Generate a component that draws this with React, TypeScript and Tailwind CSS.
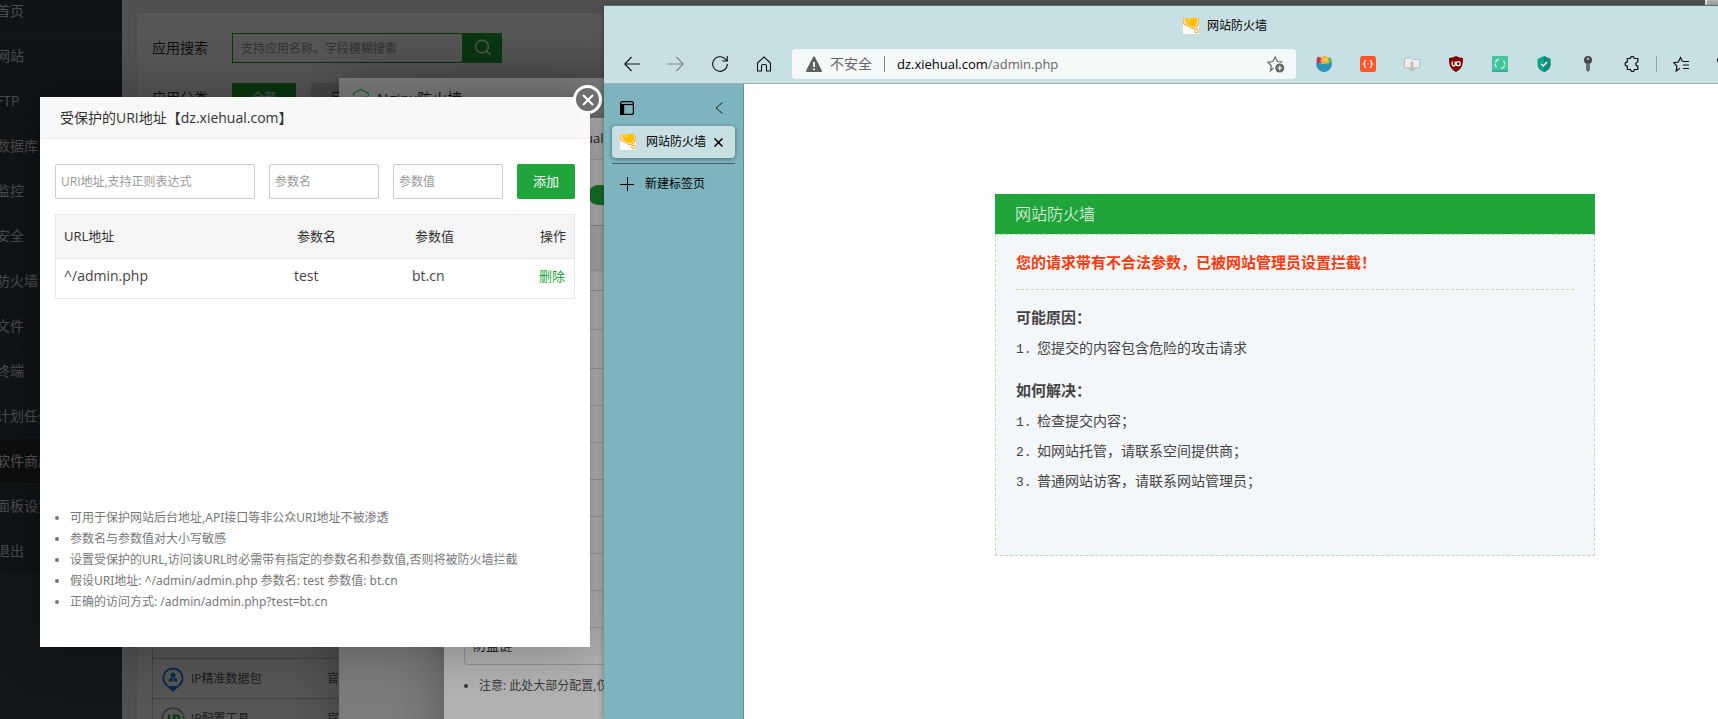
import type { ReactNode } from "react";

const MENU = ["首页", "网站", "FTP", "数据库", "监控", "安全", "防火墙", "文件", "终端", "计划任务", "软件商店", "面板设置", "退出"];

const TIPS = [
  "可用于保护网站后台地址,API接口等非公众URI地址不被渗透",
  "参数名与参数值对大小写敏感",
  "设置受保护的URL,访问该URL时必需带有指定的参数名和参数值,否则将被防火墙拦截",
  "假设URI地址: ^/admin/admin.php 参数名: test 参数值: bt.cn",
  "正确的访问方式: /admin/admin.php?test=bt.cn",
];

const CONFIG_ROWS = ["wide", "wide", "", "", "", "", "", "", ""];

function Shade() {
  return <div className="absolute inset-0 bg-black/30" />;
}

function SideMenu() {
  return (
    <nav className="w-[122px] shrink-0 overflow-hidden bg-[#3a464d]">
      <ul className="-mt-[11px]">
        {MENU.map((label) => (
          <li key={label} className="mb-px">
            <a
              href="#"
              className={
                label === "软件商店"
                  ? "-ml-1 block h-11 whitespace-nowrap bg-[#2c2e2f] text-sm leading-[43px] text-[#f0f0f0]"
                  : "-ml-1 block h-11 whitespace-nowrap bg-[#354046] text-sm leading-[43px] text-[#d8dcde]"
              }
            >
              {label}
            </a>
          </li>
        ))}
      </ul>
    </nav>
  );
}

function StoreRow({ icon, name }: { icon: ReactNode; name: string }) {
  return (
    <tr className="h-10 border-t border-[#c9c9c9]">
      <td className="w-[38px] pl-2">{icon}</td>
      <td className="w-[136px]">{name}</td>
      <td>官方</td>
    </tr>
  );
}

function Store() {
  return (
    <main className="flex min-w-0 flex-1 flex-col bg-[#f0f0f0] pt-[13px] pl-[15px]">
      <section className="relative flex-1 rounded-tl bg-white pl-[15px] shadow-[0_0_6px_rgba(0,0,0,0.1)]">
        <div className="mt-5 flex items-center text-sm text-[#333]">
          <label htmlFor="app-search" className="w-20">应用搜索</label>
          <input
            id="app-search"
            placeholder="支持应用名称、字段模糊搜索"
            className="h-[30px] w-[231px] border border-[#20a53a] px-2 text-xs placeholder:text-[#999]"
          />
          <button aria-label="搜索" className="flex h-[30px] w-[39px] items-center justify-center bg-[#20a53a]">
            <svg width="18" height="18" viewBox="0 0 18 18" fill="none" stroke="#fff" strokeWidth="1.4">
              <circle cx="8" cy="7.500" r="6.300" />
              <path d="M12.500 12l4 4" />
            </svg>
          </button>
        </div>
        <div className="mt-5 flex items-center text-sm text-[#333]">
          <span className="w-20">应用分类</span>
          <button className="h-[30px] w-16 bg-[#20a53a] text-xs text-white">全部</button>
          <button className="ml-[15px] h-[30px] w-[76px] bg-[#ddd] text-xs text-[#333]">已安装</button>
        </div>
        <div className="mt-[505px] mr-4 border-l border-[#c9c9c9]">
          <table className="w-full table-fixed border-collapse text-left text-xs text-[#555]">
            <tbody>
              <tr className="h-10 border-t border-[#c9c9c9]">
                <td className="w-[38px] pl-2">
                  <svg width="24" height="24" viewBox="0 0 24 24">
                    <path d="M12 1l7 3v6c0 4-3 7-7 9-4-2-7-5-7-9V4z" fill="#20a53a" />
                  </svg>
                </td>
                <td className="w-[136px]" />
                <td />
              </tr>
              <StoreRow
                name="IP精准数据包"
                icon={
                  <svg width="24" height="26" viewBox="0 0 24 26">
                    <path d="M12 2.500a9.500 9.500 0 0 1 6.500 16.400L12 24.500l-6.500-5.600A9.500 9.500 0 0 1 12 2.500z" fill="none" stroke="#2079e0" strokeWidth="1.800" />
                    <path d="M6.500 20h11L12 25z" fill="#2079e0" />
                    <circle cx="12" cy="9" r="2.500" fill="#2079e0" />
                    <path d="M7.500 15.500c0-3 2-4 4.500-4s4.500 1 4.500 4z" fill="#2079e0" />
                    <path d="M12 12v3.500" stroke="#fff" strokeWidth="1" />
                  </svg>
                }
              />
              <StoreRow
                name="IP配置工具"
                icon={
                  <svg width="24" height="24" viewBox="0 0 24 24">
                    <circle cx="12" cy="12" r="11" fill="none" stroke="#999" strokeWidth="1.500" />
                    <path d="M8 7.500v9M13 16.500v-8h3a2.200 2.200 0 0 1 0 4.400h-3" fill="none" stroke="#20a53a" strokeWidth="2.200" />
                  </svg>
                }
              />
            </tbody>
          </table>
        </div>
      </section>
    </main>
  );
}

function FirewallWindow() {
  return (
    <section className="absolute top-[78px] left-[339px] h-[820px] w-[900px] bg-white shadow-[1px_1px_50px_rgba(0,0,0,0.3)]">
      <header className="flex items-center gap-2 px-3.5 pt-2 text-[15px] leading-6 text-[#333]">
        <svg width="16" height="20" viewBox="0 0 16 20" fill="none" stroke="#20a53a">
          <path d="M.7 8V5L8 1.500 15.300 5v3M.7 13v2.500L8 19l7.300-3.500V13" />
          <path d="M1 9l1.200 3 1.300-3 1.200 3L6 9m1 3l1.300-3 1.300 3m1.400 0V9h3" strokeWidth=".8" />
        </svg>
        <h2>Nginx防火墙</h2>
      </header>
    </section>
  );
}

function SiteWindow() {
  return (
    <section className="absolute top-[118px] left-[444px] h-[700px] w-[700px] bg-white text-[#333] shadow-[1px_1px_50px_rgba(0,0,0,0.3)]">
      <header className="h-[42px] border-b border-[#e0e0e0] bg-[#f8f8f8] pl-[141px] text-[13px] leading-[41px]">ual</header>
      <div className="flex h-[65px] items-center pl-36">
        <button role="switch" aria-checked="true" aria-label="防火墙开关" className="mt-1 h-5 w-9 rounded-full bg-[#20a53a]" />
      </div>
      <div className="h-11 border-t border-[#ccc] bg-[#f3f3f3] shadow-[0_2px_3px_rgba(0,0,0,0.12)]" />
      <div className="mx-5 mt-[21px] rounded-b border border-[#d5d5d5]">
        {CONFIG_ROWS.map((size, i) => (
          <div key={i} className={size === "wide" ? "h-[39px] border-b border-[#ddd]" : "h-[37px] border-b border-[#ddd]"} />
        ))}
        <div className="h-9 pl-2 text-[13px] leading-[34px]">防盗链</div>
      </div>
      <ul className="mt-[11px] ml-[35px] list-disc text-xs leading-5 text-[#555]">
        <li>注意: 此处大部分配置,仅</li>
      </ul>
    </section>
  );
}

function UriDialog() {
  const field = "h-[35px] rounded-xs border border-[#ccc] px-[5px] text-xs placeholder:text-[#999]";
  return (
    <section
      role="dialog"
      aria-labelledby="uri-title"
      className="absolute top-[97px] left-10 flex h-[550px] w-[550px] flex-col bg-white shadow-[1px_1px_50px_rgba(0,0,0,0.3)]"
    >
      <header className="h-[42px] border-b border-[#eee] bg-[#f8f8f8] px-5">
        <h2 id="uri-title" className="text-sm leading-[41px] text-[#333]">受保护的URI地址【dz.xiehual.com】</h2>
      </header>
      <button
        aria-label="关闭"
        className="absolute -top-3 -right-3 flex size-[29px] items-center justify-center rounded-full border-3 border-white bg-[#6f6f6f]"
      >
        <svg width="12" height="12" viewBox="0 0 12 12" stroke="#fff" strokeWidth="2">
          <path d="M1 1l10 10M11 1L1 11" />
        </svg>
      </button>
      <form className="mx-[15px] mt-[25px] flex justify-between" onSubmit={(e) => e.preventDefault()}>
        <input aria-label="URI地址" placeholder="URI地址,支持正则表达式" className={`${field} w-[200px]`} />
        <input aria-label="参数名" placeholder="参数名" className={`${field} w-[110px]`} />
        <input aria-label="参数值" placeholder="参数值" className={`${field} w-[110px]`} />
        <button className="h-[35px] w-[58px] rounded-xs bg-[#20a53a] text-[13px] text-white">添加</button>
      </form>
      <div className="mx-[15px] mt-[15px] border border-[#e8e8e8]">
        <table className="w-full table-fixed text-left text-[13px]">
          <thead className="border-b border-[#e8e8e8] bg-[#f5f5f5] text-[#333]">
            <tr className="h-[43px]">
              <th className="w-[232px] pl-2 font-normal">URL地址</th>
              <th className="w-[118px] pl-[9px] font-normal">参数名</th>
              <th className="pl-[9px] font-normal">参数值</th>
              <th className="w-20 pr-2 text-right font-normal">操作</th>
            </tr>
          </thead>
          <tbody className="text-[#444]">
            <tr className="h-10 text-sm">
              <td className="pb-[5px] pl-2">^/admin.php</td>
              <td className="pb-[5px] pl-1.5">test</td>
              <td className="pb-[5px] pl-1.5">bt.cn</td>
              <td className="pr-[9px] pb-[3px] text-right text-[13px]">
                <a href="#" className="text-[#20a53a]">删除</a>
              </td>
            </tr>
          </tbody>
        </table>
      </div>
      <ul className="mt-auto mb-[35px] ml-[30px] list-disc font-['Noto_Sans','Noto_Sans_CJK_SC',sans-serif] text-xs leading-[21px] text-[#777]">
        {TIPS.map((tip) => (
          <li key={tip}>{tip}</li>
        ))}
      </ul>
    </section>
  );
}

function Favicon() {
  return (
    <svg width="16" height="16" viewBox="0 0 16 16" className="shrink-0">
      <path d="M0 0h16v16H0z" fill="#fff" />
      <path d="M0 0h16v6c-.5 2.500-3 5-6 5.200-2 0-3-1-4.500-2.200S1 8 0 6z" fill="#ffb75c" />
      <path d="M1 0h14v5c-1 2.500-3 5-5.200 5S6.500 8.500 5 7.500 1.500 6 1 4.500z" fill="#ffe0a8" />
      <path d="M2 0h12v4.500c-1 2.500-2.500 4.600-4.300 4.600S6.500 7.700 5 6.700 2.500 4 2 0z" fill="#ffbf00" />
      <path d="M3 0h5c1 2-1 4-3.500 4z" fill="#ffd02e" />
      <circle cx="13.500" cy="13" r="1.800" fill="#fff" stroke="#ffad42" strokeWidth="1.200" />
    </svg>
  );
}

function Tool({ label, children }: { label: string; children: ReactNode }) {
  return (
    <button aria-label={label} className="flex h-8 w-11 shrink-0 items-center justify-center">
      <svg width="16" height="16" viewBox="0 0 16 16" fill="none" stroke="#111" strokeWidth="1.100">
        {children}
      </svg>
    </button>
  );
}

function Toolbar() {
  return (
    <header className="h-[78px] border-b border-[#9ab3b7] bg-[#c8dfe3]">
      <div className="flex h-10 items-center justify-center gap-2 text-xs text-black">
        <Favicon />
        <h1>网站防火墙</h1>
      </div>
      <div className="mt-0.5 flex h-8 items-center pl-1.5">
        <Tool label="后退"><path d="M7.500 1L.8 8l6.700 7M1 8h15" /></Tool>
        <Tool label="前进"><path d="M8.500 1l6.700 7-6.700 7M15 8H0" stroke="#7b898b" /></Tool>
        <Tool label="刷新"><path d="M15.300 8a7.300 7.300 0 1 1-2.200-5.200L15 4.700M15.300 0v5h-5" /></Tool>
        <Tool label="主页"><path d="M1.500 7L8 1l6.500 6v8h-4v-5a1.500 1.500 0 0 0-1.500-1.500H7A1.500 1.500 0 0 0 5.500 10v5h-4z" /></Tool>
        <div className="ml-1.5 flex h-[30px] min-w-0 flex-1 items-center rounded bg-[#f5f9fa] px-[11px] text-sm">
          <svg width="22" height="17" viewBox="0 0 22 17" className="shrink-0">
            <path d="M11 1.500l7 13.500H4z" fill="#5f6263" stroke="#5f6263" strokeWidth="2" strokeLinejoin="round" />
            <path d="M11 6v5M11 12.500v1.500" stroke="#fff" strokeWidth="1.800" />
          </svg>
          <span className="ml-[5px] text-[#666]">不安全</span>
          <span className="mx-3 h-4 w-px bg-[#888]" />
          <span className="flex-1 text-[13px] text-[#666]"><span className="text-black">dz.xiehual.com</span>/admin.php</span>
          <button aria-label="收藏此页">
            <svg width="18" height="18" viewBox="0 0 18 18" fill="none" stroke="#666" strokeWidth="1.200">
              <path d="M6.500 13L3.500 15.800l.8-5L.8 7.200l5-.7L8.200 2l2.300 4.500 5 .7" />
              <circle cx="12.800" cy="13" r="4.500" fill="#5f6263" stroke="none" />
              <path d="M12.800 10.500v5M10.300 13h5" stroke="#fff" />
            </svg>
          </button>
        </div>
        <div className="ml-1.5 flex shrink-0 items-center">
          <Tool label="沙拉查词">
            <g stroke="none">
              <path d="M.5 7C1 4 0 2 2 .8l4 1.200v5z" fill="#c0394b" />
              <path d="M11 3l2.500-2L15.700 4v3.500H11z" fill="#4bb56a" />
              <path d="M4.500 6c0-3.500 1.500-6 4-6s4.500 2 4.500 7l-4 1z" fill="#f6b42c" />
              <path d="M7 3l1.500 1.500L11 3" fill="none" stroke="#fbd873" />
              <path d="M0 6.500c2 0 4 1.200 8 1.200s6-.7 8-.7c0 5.500-3.500 9-8 9S0 12 0 6.500z" fill="#2b93b5" />
            </g>
          </Tool>
          <Tool label="JSON">
            <rect width="16" height="16" rx="2.500" fill="#ff5630" stroke="none" />
            <path d="M6 4.500c-2 0-1 1.500-1.300 2.500L3.500 8l1.200 1c.3 1-.7 2.500 1.300 2.500M10 4.500c2 0 1 1.500 1.300 2.500l1.200 1-1.200 1c-.3 1 .7 2.500-1.300 2.500M7 8h2" stroke="#fff" />
          </Tool>
          <Tool label="下载">
            <path d="M.5 2h6l1.500 1.500h7.500V12H.5z" fill="#ededed" stroke="#b5b5b5" strokeWidth=".8" />
            <path d="M7 6h2v6h2.500L8 15.500 4.500 12H7z" fill="#c4c4c4" stroke="#aaa" strokeWidth=".5" />
          </Tool>
          <Tool label="uBlock">
            <path d="M8 0c2 1.300 4.500 2 7 2 0 7-1 11-7 14C2 13 1 9 1 2c2.500 0 5-.7 7-2z" fill="#800000" stroke="none" />
            <path d="M4.200 5.500v3a1.500 1.500 0 0 0 3 0v-3" stroke="#fff" strokeWidth="1.300" />
            <circle cx="10.200" cy="7.700" r="2" stroke="#fff" strokeWidth="1.300" />
          </Tool>
          <Tool label="同步">
            <path d="M0 0h16v16H0z" fill="#43c59e" stroke="none" />
            <path d="M0 14h16v2H0z" fill="#3aaa9a" stroke="none" />
            <path d="M7 3.200A4.800 4.800 0 0 0 4.600 11.300M9 12.700A4.800 4.800 0 0 0 11.400 4.600" stroke="#d8f5ea" strokeWidth="1.300" strokeDasharray="5 1" />
          </Tool>
          <Tool label="安全">
            <path d="M8 0l6.500 3v5c0 4-2.500 6.500-6.500 8-4-1.500-6.500-4-6.500-8V3z" fill="#0aa184" stroke="none" />
            <path d="M8 0l6.500 3v5c0 4-2.500 6.500-6.500 8z" fill="#138a76" stroke="none" />
            <path d="M5.300 8l2 2 3.700-4" stroke="#fff" strokeWidth="1.500" />
          </Tool>
          <Tool label="密码">
            <circle cx="8" cy="4" r="4" fill="#474747" stroke="none" />
            <path d="M6.200 7h3.600v7L8 16l-1.800-2z" fill="#5a5a5a" stroke="none" />
            <circle cx="8" cy="2.800" r="1.100" fill="#c8dfe3" stroke="none" />
            <path d="M8 8v6" stroke="#999" strokeWidth=".7" />
          </Tool>
          <Tool label="扩展">
            <path d="M4 2.500h2.200a2 2 0 0 1 4 0h3.600V6a2 2 0 0 0 0 4v3.500h-3.400a2 2 0 0 1-4 0H3.300v-3.300a2.200 2.200 0 1 1 0-4.400V2.500z" strokeWidth="1.200" />
          </Tool>
          <span className="mr-0.5 ml-0.5 h-4 w-px bg-[#8fa5a9]" />
          <Tool label="收藏夹">
            <path d="M7 12.300L3.200 15l.7-4.800L.8 6.700l4.500-.7L7.500 1.500 9.500 5.500M10 5.500h6M10 9h6M10 12.500h6" strokeWidth="1.200" />
          </Tool>
          <Tool label="集锦"><path d="M0 3h10v10H4zM13 5v10H6" strokeWidth="1.200" /></Tool>
          <Tool label="更多"><path d="M2 8h1M8 8h1M14 8h1" strokeWidth="1.500" /></Tool>
          <span className="w-[55px]" />
        </div>
      </div>
    </header>
  );
}

function TabRail() {
  return (
    <aside className="w-[140px] shrink-0 border-r border-[#5f9099] bg-[#7eb4be] px-2 text-xs text-black">
      <div className="flex h-[42px] items-center justify-between px-2 pt-1.5 pr-3">
        <button aria-label="标签页操作">
          <svg width="14" height="14" viewBox="0 0 14 14" fill="none" stroke="#000" strokeWidth="1.200">
            <rect x=".6" y=".6" width="12.800" height="12.800" rx="2" />
            <path d="M.6 3.500h12.800" />
            <path d="M.6 3.500h3v10h-3z" fill="#000" />
          </svg>
        </button>
        <button aria-label="折叠窗格">
          <svg width="8" height="12" viewBox="0 0 8 12" fill="none" stroke="#222"><path d="M7.500.5L1 6l6.500 5.500" /></svg>
        </button>
      </div>
      <div className="flex h-8 items-center rounded bg-[#c8dfe3] pr-3 pl-2 shadow-[0_1px_4px_rgba(0,0,0,0.4)]">
        <Favicon />
        <span className="ml-2.5 flex-1 whitespace-nowrap">网站防火墙</span>
        <button aria-label="关闭标签页">
          <svg width="9" height="9" viewBox="0 0 9 9" stroke="#000" strokeWidth="1.500"><path d="M.5.5l8 8M8.500.5l-8 8" /></svg>
        </button>
      </div>
      <hr className="mt-[5px] border-[#3d666d]" />
      <button className="mt-2.5 flex h-5 items-center gap-[11px] pl-2">
        <svg width="14" height="14" viewBox="0 0 14 14" stroke="#000"><path d="M7.500 0v14M0 7.500h14" /></svg>
        新建标签页
      </button>
    </aside>
  );
}

function Reasons({ title, items }: { title: string; items: string[] }) {
  return (
    <section className="mb-3">
      <h3 className="text-[15px] leading-[30px] font-bold">{title}</h3>
      <ol className="pt-px text-sm leading-[30px]">
        {items.map((item, i) => (
          <li key={item} className="flex h-[30px] items-baseline">
            <span className="w-[21px] shrink-0 font-['Liberation_Mono',monospace] text-[13px]">{i + 1}.</span>
            {item}
          </li>
        ))}
      </ol>
    </section>
  );
}

function BlockedPage() {
  return (
    <main className="min-w-0 flex-1 bg-white pt-[110px]">
      <article className="mx-auto w-[600px]">
        <h2 className="h-10 bg-[#20a53a] px-5 text-base leading-10 font-light text-white">网站防火墙</h2>
        <div className="min-h-[322px] border border-dashed border-[#c6d9b6] bg-[#f3f7fa] px-5 text-[#444]">
          <p className="mb-3 border-b border-dashed border-[#c6d9b6] py-[14px] text-[15px] leading-[26px] font-bold text-[#fc3a0c]">
            您的请求带有不合法参数，已被网站管理员设置拦截！
          </p>
          <Reasons title="可能原因：" items={["您提交的内容包含危险的攻击请求"]} />
          <Reasons title="如何解决：" items={["检查提交内容；", "如网站托管，请联系空间提供商；", "普通网站访客，请联系网站管理员；"]} />
        </div>
      </article>
    </main>
  );
}

export default function App() {
  return (
    <div className="relative flex h-screen overflow-hidden font-['Open_Sans','Noto_Sans_CJK_SC',sans-serif]">
      <div className="relative flex min-w-0 flex-1 overflow-hidden">
        <SideMenu />
        <Store />
        <Shade />
        <FirewallWindow />
        <Shade />
        <SiteWindow />
        <Shade />
        <UriDialog />
      </div>
      <div className="w-[13px] shrink-0 border-l-2 border-[#eee] bg-[#b4b4b4]" />
      <div className="absolute top-[5px] -right-32 bottom-0 left-[604px] flex flex-col border-t border-[#66696d] shadow-[0_0_6px_rgba(0,0,0,0.35)]">
        <Toolbar />
        <div className="flex min-h-0 flex-1">
          <TabRail />
          <BlockedPage />
        </div>
      </div>
    </div>
  );
}
